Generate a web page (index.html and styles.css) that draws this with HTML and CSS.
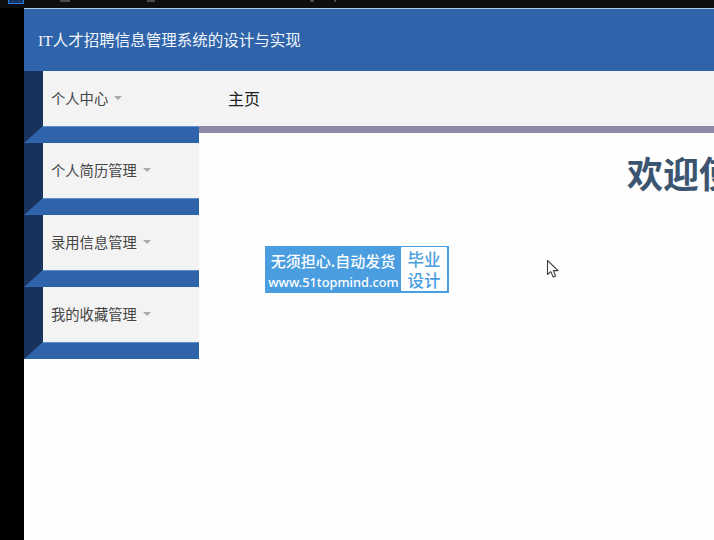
FILE: index.html
```html
<!DOCTYPE html>
<html lang="zh">
<head>
<meta charset="utf-8">
<title>IT人才招聘信息管理系统的设计与实现</title>
<link rel="stylesheet" href="styles.css">
</head>
<body>
<div class="topbar">
  <span class="app-icon"></span>
  <span class="frag frag-a"></span>
  <span class="frag frag-b"></span>
  <span class="frag frag-c"></span>
  <span class="frag frag-d"></span>
</div>
<div class="shell">
  <div class="gutter"></div>
  <div class="app">
    <header class="header">IT人才招聘信息管理系统的设计与实现</header>
    <div class="body">
      <aside class="sidebar">
        <div class="item"><div class="item-face"><span>个人中心</span><i class="caret"></i></div></div>
        <div class="band"><div class="band-fill"></div></div>
        <div class="item"><div class="item-face"><span>个人简历管理</span><i class="caret"></i></div></div>
        <div class="band"><div class="band-fill"></div></div>
        <div class="item"><div class="item-face"><span>录用信息管理</span><i class="caret"></i></div></div>
        <div class="band"><div class="band-fill"></div></div>
        <div class="item"><div class="item-face"><span>我的收藏管理</span><i class="caret"></i></div></div>
        <div class="band"><div class="band-fill"></div></div>
      </aside>
      <main class="main">
        <div class="crumb">主页</div>
        <div class="strip"></div>
        <h1 class="welcome">欢迎使用IT人才招聘信息管理系统的设计与实现</h1>
        <div class="ad">
          <div class="ad-left">
            <div class="ad-slogan">无须担心.自动发货</div>
            <div class="ad-url">www.51topmind.com</div>
          </div>
          <div class="ad-right"><span>毕业</span><span>设计</span></div>
        </div>
      </main>
    </div>
  </div>
</div>
<svg class="cursor" width="14" height="20" viewBox="0 0 14 20">
  <path d="M1.5 1.5V15.5L4.8 12.6L7.2 18L9.6 17L7.3 11.6H12Z" fill="#fff" stroke="#3a3f45" stroke-width="1.1" stroke-linejoin="round"/>
</svg>
</body>
</html>
```
FILE: styles.css
```css
html, body {
  margin: 0;
  padding: 0;
  height: 100%;
  overflow: hidden;
  background: #000;
  font-family: "Noto Sans CJK SC", "Liberation Sans", sans-serif;
}
.topbar {
  height: 8px;
  background: #0e0e10;
  position: relative;
  overflow: hidden;
}
.app-icon {
  position: absolute;
  left: 8px;
  top: -6px;
  width: 14px;
  height: 8px;
  border: 1px solid #2a7be0;
  background: #12345f;
}
.frag {
  position: absolute;
  top: 0;
  height: 2px;
  background: #4a4a4a;
}
.frag-a { left: 60px; width: 10px; }
.frag-b { left: 147px; width: 8px; }
.frag-c { left: 310px; width: 4px; }
.frag-d { left: 334px; width: 2px; }
.shell {
  display: flex;
  height: 532px;
}
.gutter {
  width: 24px;
  flex: none;
  background: #000;
}
.app {
  flex: 1;
  min-width: 0;
  background: #fefefe;
  overflow: hidden;
}
.header {
  height: 63px;
  box-sizing: border-box;
  border-top: 1px solid #a9cdea;
  background: #2f64ab;
  color: #f2f6fa;
  font: 15.5px/63px "Liberation Serif", "Noto Sans CJK SC", serif;
  padding-left: 14px;
}
.body {
  display: flex;
}
.sidebar {
  width: 175px;
  flex: none;
}
.item {
  height: 55px;
  box-sizing: border-box;
  padding-left: 19px;
  background: #17335c;
}
.item-face {
  height: 100%;
  box-sizing: border-box;
  background: #f3f3f3;
  color: #444;
  font-size: 14.3px;
  display: flex;
  align-items: center;
  padding: 0 0 2px 8px;
  gap: 6px;
}
.caret {
  width: 0;
  height: 0;
  border-left: 4px solid transparent;
  border-right: 4px solid transparent;
  border-top: 4px solid #a9a9a9;
}
.band {
  height: 17px;
  background: #17335c;
}
.band-fill {
  height: 100%;
  box-sizing: border-box;
  border-top: 1px solid #5d8fce;
  background: #2f64ab;
  clip-path: polygon(19px 0, 100% 0, 100% 100%, 0 100%);
}
.main {
  flex: 1;
  min-width: 0;
  overflow: hidden;
}
.crumb {
  height: 55px;
  background: #f4f4f4;
  color: #222;
  font-size: 16px;
  line-height: 54px;
  padding-left: 29px;
}
.strip {
  height: 7px;
  background: #8d8aa9;
}
.welcome {
  margin: 15px 0 0 428px;
  width: 900px;
  font-size: 36px;
  line-height: 48px;
  font-weight: 700;
  color: #3b5570;
  white-space: nowrap;
}
.ad {
  display: flex;
  width: 184px;
  height: 47px;
  box-sizing: border-box;
  margin: 50px 0 0 66px;
  background: #4a9ee0;
  padding: 1px 2px 2px 0;
}
.ad-left {
  width: 136px;
  flex: none;
  color: #fff;
  text-align: center;
  overflow: hidden;
}
.ad-slogan {
  font-size: 15px;
  font-weight: 500;
  line-height: 27px;
  white-space: nowrap;
}
.ad-url {
  font: 500 12.8px/17px "Noto Sans", sans-serif;
  border-bottom: 1px solid #a7d2f2;
  margin: 0 2px 0 3px;
  white-space: nowrap;
}
.ad-right {
  flex: 1;
  display: flex;
  flex-direction: column;
  align-items: center;
  background: #fff;
  color: #4a9ee0;
  font-size: 16.5px;
  font-weight: 500;
  line-height: 21px;
  border-radius: 1px;
  padding-top: 2px;
}
.cursor {
  position: absolute;
  left: 546px;
  top: 259px;
}
```
